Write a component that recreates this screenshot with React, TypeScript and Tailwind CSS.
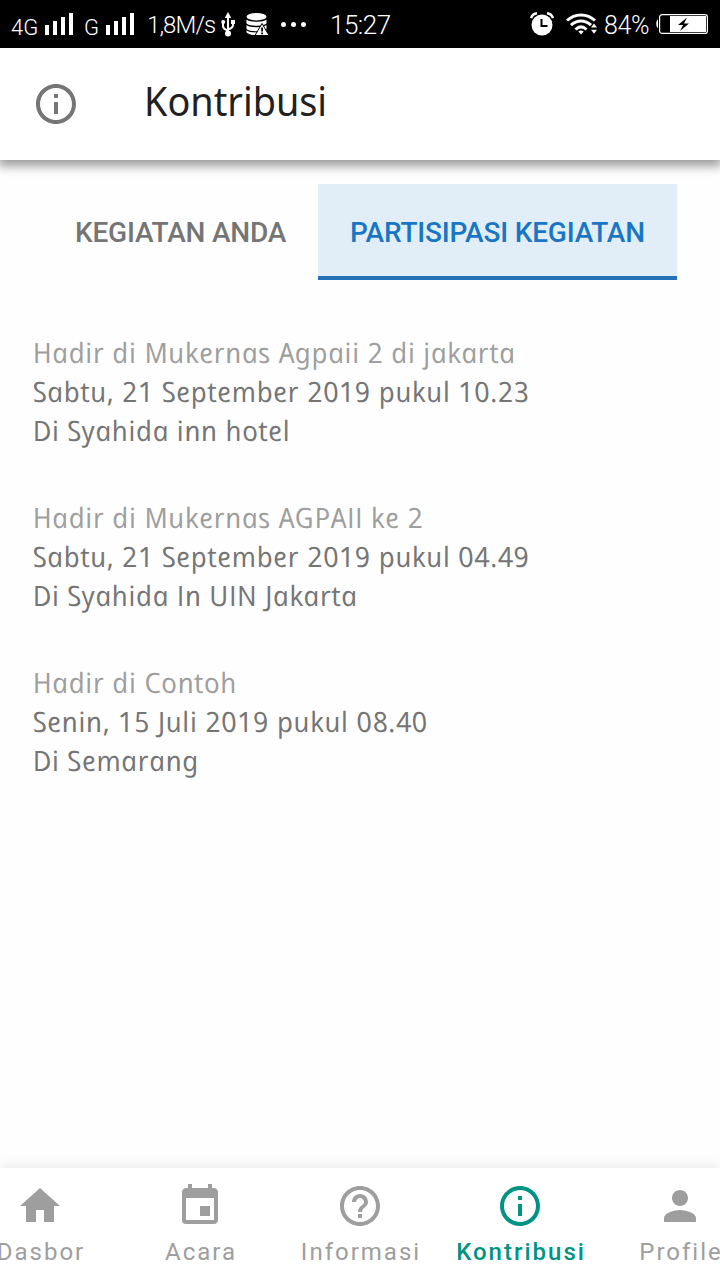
import React from "react";
import type { IconType } from "react-icons";
import {
  MdEvent,
  MdHelpOutline,
  MdHome,
  MdInfoOutline,
  MdPerson,
} from "react-icons/md";
import clsx from "clsx";

interface Activity {
  title: string;
  date: string;
  place: string;
}

interface NavItem {
  label: string;
  icon: IconType;
  active?: boolean;
}

const activities: Activity[] = [
  {
    title: "Hadir di Mukernas Agpaii 2 di jakarta",
    date: "Sabtu, 21 September 2019 pukul 10.23",
    place: "Di Syahida inn hotel",
  },
  {
    title: "Hadir di Mukernas AGPAII ke 2",
    date: "Sabtu, 21 September 2019 pukul 04.49",
    place: "Di Syahida In UIN Jakarta",
  },
  {
    title: "Hadir di Contoh",
    date: "Senin, 15 Juli 2019 pukul 08.40",
    place: "Di Semarang",
  },
];

const navItems: NavItem[] = [
  { label: "Dasbor", icon: MdHome },
  { label: "Acara", icon: MdEvent },
  { label: "Informasi", icon: MdHelpOutline },
  { label: "Kontribusi", icon: MdInfoOutline, active: true },
  { label: "Profile", icon: MdPerson },
];

const SignalBars: React.FC = () => (
  <svg width="29" height="22" viewBox="0 0 29 22" fill="currentColor">
    <path d="M0 12h4v10H0zM8 8h4v14H8zM16 4h4v18h-4zM24 0h4v22h-4z" />
  </svg>
);

const UsbIcon: React.FC = () => (
  <svg width="14" height="25" viewBox="0 0 14 25" fill="none" stroke="currentColor" strokeWidth="2">
    <path d="M7 4v17M2 10v4c0 2 2 3.500 5 4.500M12 9v4c0 2-2 3.500-5 4.500" />
    <path d="M7 0l3.300 6H3.700zM10 8h4v4h-4z" fill="currentColor" stroke="none" />
    <circle cx="2.200" cy="10" r="2" fill="currentColor" stroke="none" />
    <circle cx="7" cy="21.500" r="3" fill="currentColor" stroke="none" />
  </svg>
);

const DatabaseIcon: React.FC = () => (
  <svg width="23" height="23" viewBox="0 0 23 23" fill="currentColor">
    <ellipse cx="10.500" cy="3.700" rx="10" ry="3.700" />
    <path d="M.5 6.500c3 3 17 3 20 0v4c-3 3-17 3-20 0zM.5 12c3 3 17 3 20 0v4c-3 3-17 3-20 0zM.5 17.200c3 3 17 3 20 0v2.300c-3 3.500-17 3.500-20 0z" />
    <path d="M16 10.500L23 22.500H9z" stroke="#000" strokeWidth="1" />
    <path d="M15.200 14.500h1.800v4h-1.800zM15.200 19.500h1.800v1.700h-1.800z" fill="#000" />
  </svg>
);

const AlarmIcon: React.FC = () => (
  <svg width="24" height="24" viewBox="0 0 24 24" fill="none">
    <circle cx="12" cy="13" r="10.500" fill="currentColor" />
    <path d="M1 6C2 3 4 1.500 7 1.200M17 1.200c3 .3 5 1.800 6 4.800" stroke="currentColor" strokeWidth="2.400" />
    <path d="M11.500 7v7h6" stroke="#000" strokeWidth="2" />
  </svg>
);

const WifiIcon: React.FC = () => (
  <svg width="31" height="22" viewBox="0 0 31 22" fill="none" stroke="currentColor" strokeWidth="3">
    <path d="M1 7.500c8-7.500 20-7.500 28 0M5 12.200c6-5.500 14-5.500 20 0M9.500 16.500c3.500-3.300 7.500-3.300 11 0" />
    <path d="M12.300 18.500c1.500-1.200 3.900-1.200 5.400 0L15 21.500zM25 14.500l3-4 3 4zM25 16.800h6l-3 4z" fill="currentColor" stroke="none" />
  </svg>
);

const BatteryIcon: React.FC = () => (
  <svg width="52" height="20" viewBox="0 0 52 20" fill="none">
    <path d="M2 5.500C-.3 6.500-.3 13 2 14z" fill="currentColor" />
    <rect x="3.600" y=".6" width="47.800" height="18.800" rx="2.500" stroke="currentColor" strokeWidth="1.200" />
    <path d="M14 2h36v16H14z" fill="currentColor" />
    <path d="M31 3.500L22 11h5l-3 6 9-7.500h-5z" fill="#000" />
  </svg>
);

const StatusBar: React.FC = () => (
  <div className="flex h-12 shrink-0 items-center bg-black font-['Roboto',sans-serif] text-white">
    <div className="ml-[11px] w-[34px] pt-[7px] text-[22px] leading-none font-[350]">4G</div>
    <SignalBars />
    <div className="ml-[10px] w-[22px] pt-[7px] text-[22px] leading-none font-[350]">G</div>
    <SignalBars />
    <div className="ml-3 w-[74px] pt-0.5 text-[24px] leading-none font-light tracking-[-0.9px]">1,8M/s</div>
    <UsbIcon />
    <div className="ml-[11px]">
      <DatabaseIcon />
    </div>
    <div className="ml-3 flex gap-[5px]">
      <div className="size-[5px] rounded-full bg-white" />
      <div className="size-[5px] rounded-full bg-white" />
      <div className="size-[5px] rounded-full bg-white" />
    </div>
    <div className="ml-6 pt-0.5 text-[26px] leading-none font-light tracking-[-0.5px]">15:27</div>
    <div className="mr-3 ml-auto flex items-center">
      <AlarmIcon />
      <div className="ml-3">
        <WifiIcon />
      </div>
      <div className="ml-[7px] w-[52px] pt-0.5 text-[25px] leading-none font-light tracking-[-0.4px]">84%</div>
      <BatteryIcon />
    </div>
  </div>
);

const App: React.FC = () => {
  return (
    <div className="flex h-[1280px] w-[720px] flex-col overflow-hidden bg-[#fefefe] font-['Noto_Sans',sans-serif]">
      <StatusBar />

      <header className="flex h-28 shrink-0 items-center bg-white pl-8 shadow-[0_4px_10px_2px_rgba(0,0,0,0.4)]">
        <MdInfoOutline className="size-12 text-[#757575]" />
        <h1 className="ml-16 origin-left scale-x-[0.945] pb-1.5 text-[40px] text-[#212121]">
          Kontribusi
        </h1>
      </header>

      <div className="mt-6 ml-[43px] flex h-24 shrink-0 font-['Roboto',sans-serif] text-[28px] font-medium tracking-[-0.2px]">
        <button className="w-[275px] pt-0.5 pl-8 text-left text-[#757575]">KEGIATAN ANDA</button>
        <button className="w-[359px] border-b-4 border-[#2672b9] bg-[#e1eef7] pt-1.5 pl-8 text-left text-[#1976c5]">
          PARTISIPASI KEGIATAN
        </button>
      </div>

      {/* upright italic with the single-storey "a" and "g" */}
      <main className="flex grow flex-col gap-12 px-8 pt-[53px] font-['Open_Sans','Noto_Sans',sans-serif] text-[28px] leading-[39px] tracking-[0.52px] text-[#757575] italic [font-feature-settings:'ss02'] [&_span]:inline-block [&_span]:origin-left [&_span]:skew-x-12">
        {activities.map((item) => (
          <div key={item.date}>
            <h2 className="text-[#9e9e9e]"><span>{item.title}</span></h2>
            <p><span>{item.date}</span></p>
            <p><span>{item.place}</span></p>
          </div>
        ))}
      </main>

      <nav className="flex h-28 shrink-0 justify-center bg-white font-['Roboto',sans-serif] shadow-[0_0_14px_rgba(0,0,0,0.12)]">
        {navItems.map(({ label, icon: Icon, active }) => (
          <a
            key={label}
            className={clsx(
              "flex w-40 shrink-0 flex-col items-center pt-[14px] text-[24px] leading-7 tracking-[2px]",
              active ? "font-medium text-[#009383]" : "text-[#9e9e9e]"
            )}
          >
            <Icon className="mb-2 size-12" />
            <span className="pl-0.5">{label}</span>
          </a>
        ))}
      </nav>
    </div>
  );
};

export default App;
